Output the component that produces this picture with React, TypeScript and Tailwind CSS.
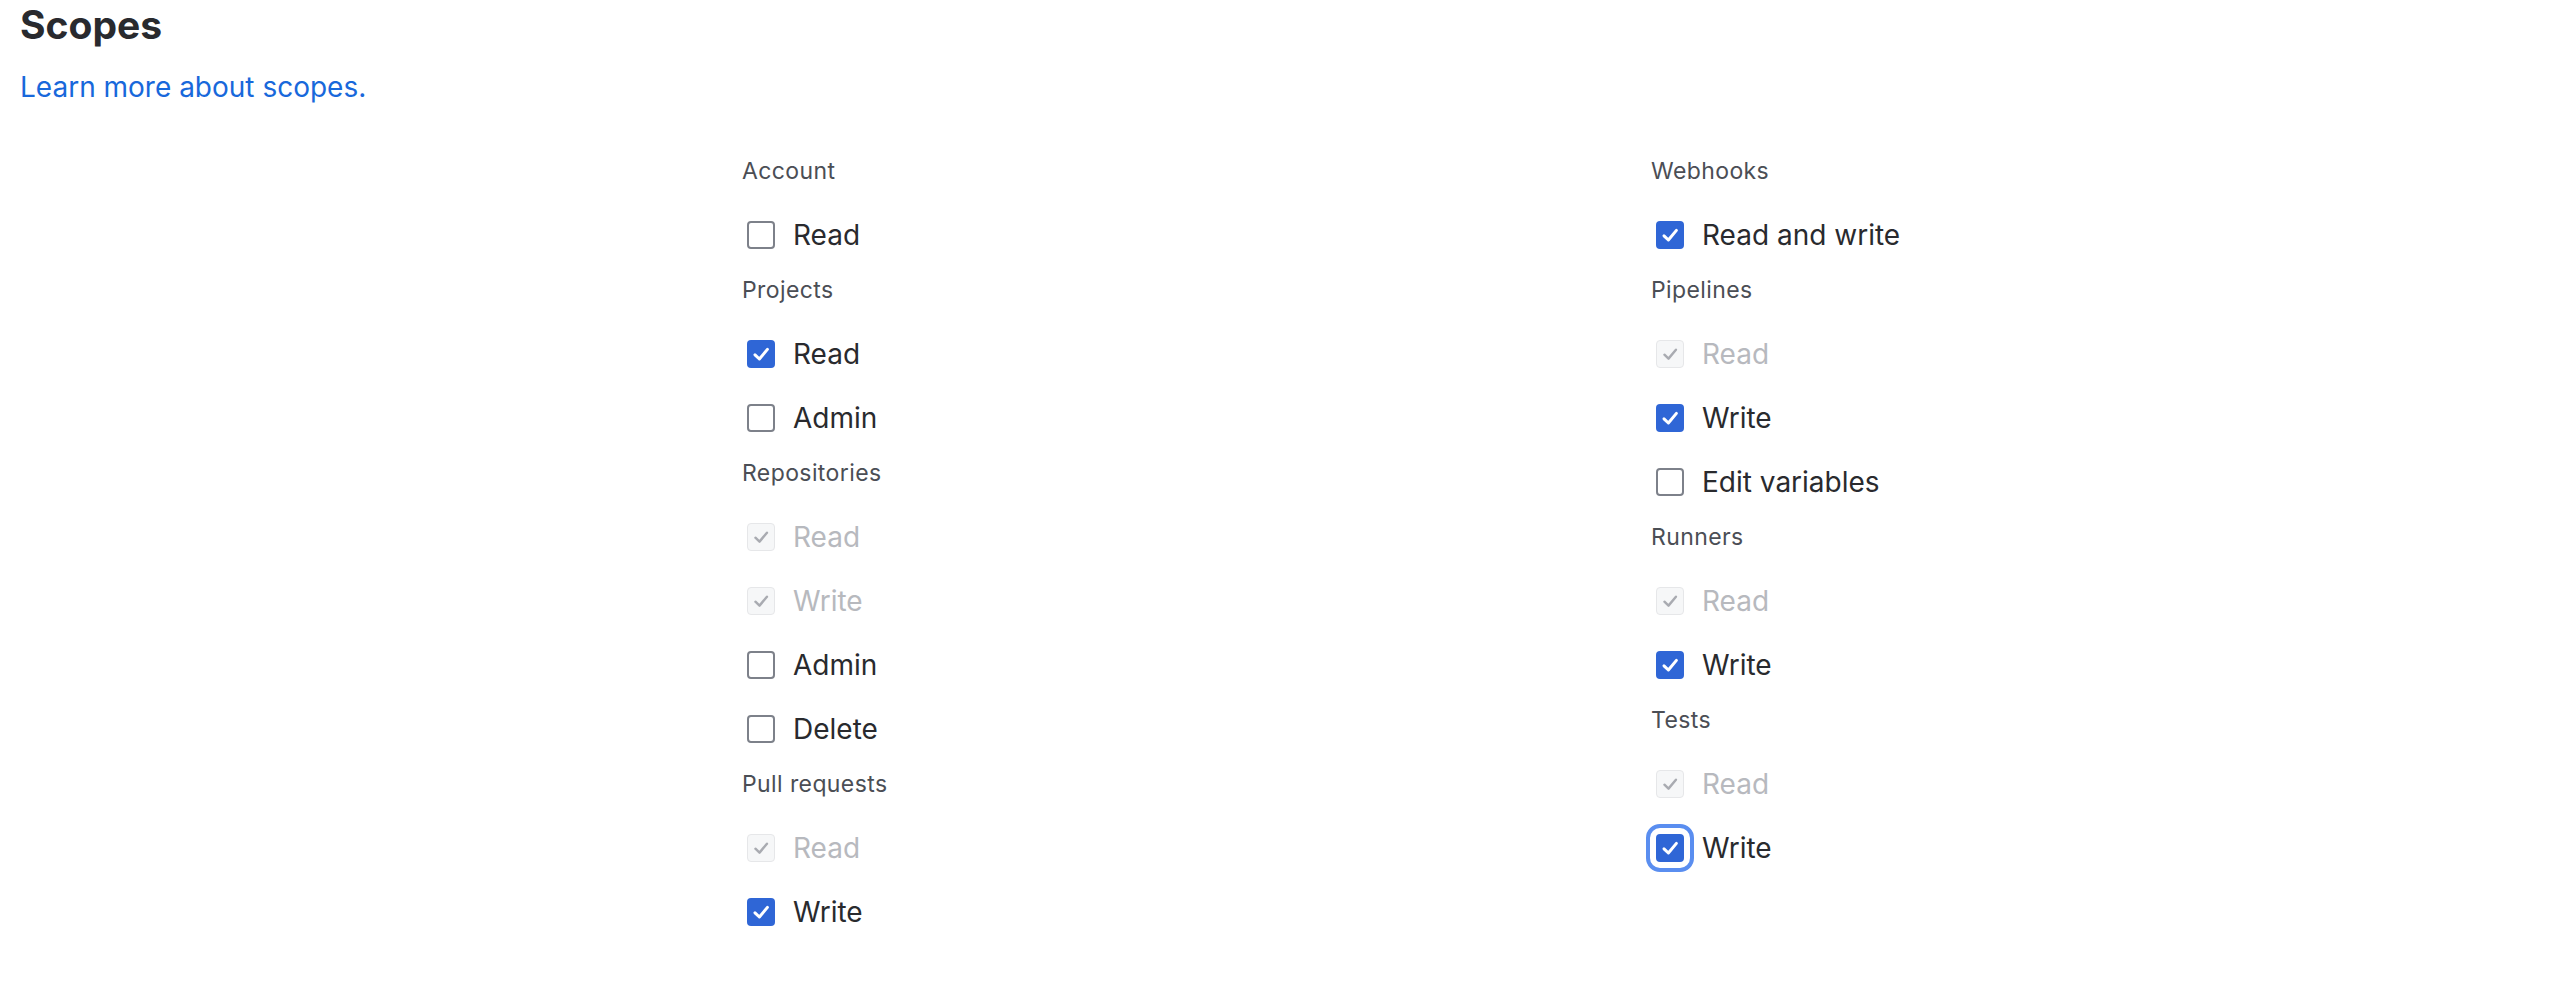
import React from "react";

type State = "unchecked" | "checked" | "disabled" | "focused";
type Item = { label: string; state: State };
type Group = { title: string; items: Item[] };

const col1: Group[] = [
  { title: "Account", items: [{ label: "Read", state: "unchecked" }] },
  {
    title: "Projects",
    items: [
      { label: "Read", state: "checked" },
      { label: "Admin", state: "unchecked" },
    ],
  },
  {
    title: "Repositories",
    items: [
      { label: "Read", state: "disabled" },
      { label: "Write", state: "disabled" },
      { label: "Admin", state: "unchecked" },
      { label: "Delete", state: "unchecked" },
    ],
  },
  {
    title: "Pull requests",
    items: [
      { label: "Read", state: "disabled" },
      { label: "Write", state: "checked" },
    ],
  },
];

const col2: Group[] = [
  { title: "Webhooks", items: [{ label: "Read and write", state: "checked" }] },
  {
    title: "Pipelines",
    items: [
      { label: "Read", state: "disabled" },
      { label: "Write", state: "checked" },
      { label: "Edit variables", state: "unchecked" },
    ],
  },
  {
    title: "Runners",
    items: [
      { label: "Read", state: "disabled" },
      { label: "Write", state: "checked" },
    ],
  },
  {
    title: "Tests",
    items: [
      { label: "Read", state: "disabled" },
      { label: "Write", state: "focused" },
    ],
  },
];

function Check({ color, width }: { color: string; width: number }) {
  return (
    <svg viewBox="0 0 28 28" className="w-full h-full" fill="none">
      <path
        d="M8 14.8 L12.4 19 L20.4 9.4"
        stroke={color}
        strokeWidth={width}
        strokeLinecap="round"
        strokeLinejoin="round"
      />
    </svg>
  );
}

function Box({ state }: { state: State }) {
  if (state === "unchecked") {
    return <div className="shrink-0 w-[28px] h-[28px] rounded-[4px] border-2 border-[#7d818a] bg-white" />;
  }
  if (state === "disabled") {
    return (
      <div className="shrink-0 w-[28px] h-[28px] rounded-[4px] border border-[#e6e7e9] bg-[#f6f7f8]">
        <Check color="#a9abb1" width={2.6} />
      </div>
    );
  }
  if (state === "focused") {
    return (
      <div className="shrink-0 w-[28px] h-[28px] rounded-[4px] bg-[#2f66d6] outline-[4px] outline-solid outline-[#5a8ef0] outline-offset-[6px]">
        <Check color="#ffffff" width={3} />
      </div>
    );
  }
  return (
    <div className="shrink-0 w-[28px] h-[28px] rounded-[4px] bg-[#2f66d6]">
      <Check color="#ffffff" width={3} />
    </div>
  );
}

function Column({ groups }: { groups: Group[] }) {
  return (
    <div className="flex flex-col">
      {groups.map((g) => (
        <div key={g.title} className="flex flex-col">
          <div className="h-[47px] mb-[8px] flex items-center text-[23px] tracking-[0.4px] text-[#4b4e55]">
            {g.title}
          </div>
          {g.items.map((it, i) => (
            <div key={i} className="h-[64px] flex items-center pl-[5px] gap-[18px]">
              <Box state={it.state} />
              <span
                className={
                  "text-[28px] leading-[40px] " +
                  (it.state === "disabled" ? "text-[#b7b9be]" : "text-[#292a2e]")
                }
              >
                {it.label}
              </span>
            </div>
          ))}
        </div>
      ))}
    </div>
  );
}

export default function App() {
  return (
    <div
      className="w-[2572px] h-[988px] bg-white pl-[20px] pt-[5px]"
      style={{ fontFamily: "Inter, 'Noto Sans', sans-serif" }}
    >
      <h2 className="h-[40px] text-[39px] leading-[40px] font-bold text-[#292a2e]">Scopes</h2>
      <a href="#" className="block mt-[22px] text-[28px] leading-[40px] text-[#1868db]">
        Learn more about scopes.
      </a>
      <div className="mt-[41px] ml-[722px] grid grid-cols-[909px_909px]">
        <Column groups={col1} />
        <Column groups={col2} />
      </div>
    </div>
  );
}
